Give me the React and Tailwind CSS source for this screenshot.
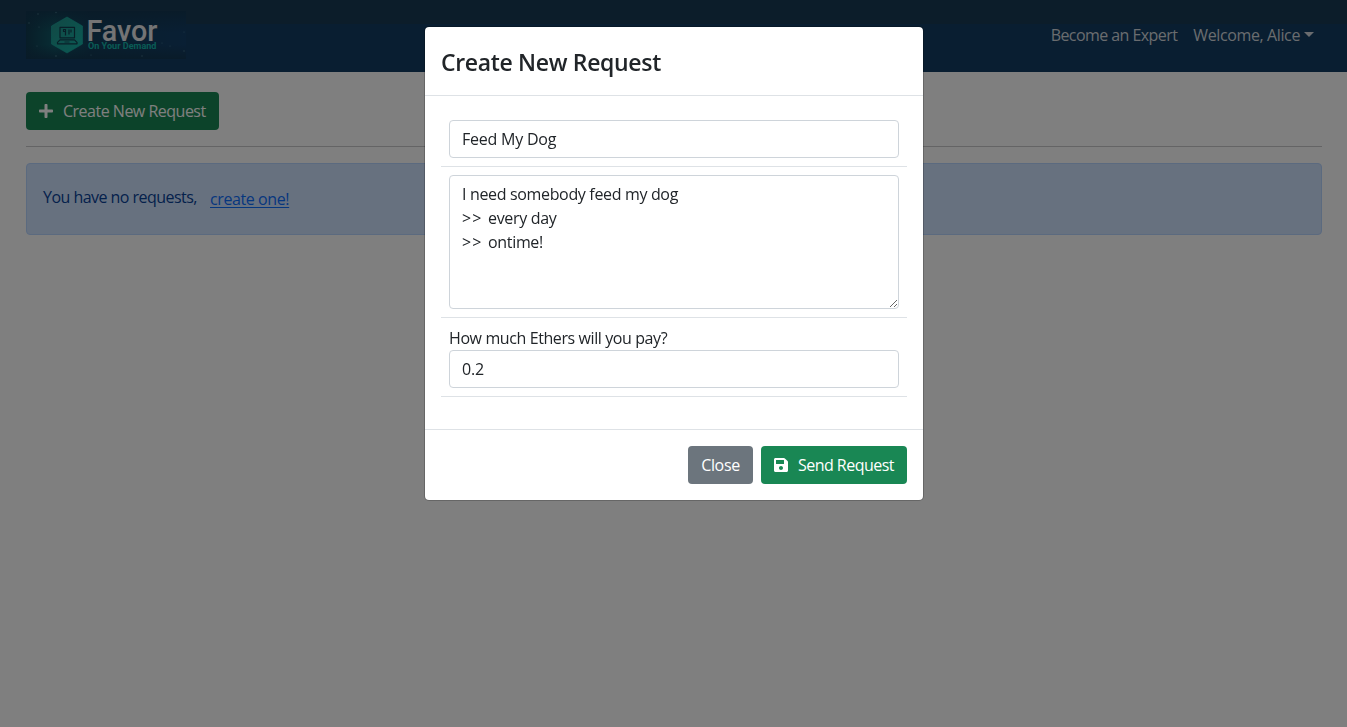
import { FaPlus, FaSave } from "react-icons/fa";

function Logo() {
  return (
    <svg width="160" height="48" viewBox="26 11 160 48" className="block" role="img" aria-label="Favor">
      <defs>
        <linearGradient id="logoBg" x1="0" x2="1" y1="0" y2="0">
          <stop offset="0" stopColor="#113a50" />
          <stop offset="0.18" stopColor="#115a68" />
          <stop offset="0.4" stopColor="#123f5c" />
          <stop offset="1" stopColor="#123e68" />
        </linearGradient>
        <linearGradient id="logoShade" x1="0" x2="0" y1="0" y2="1">
          <stop offset="0" stopColor="#123650" stopOpacity="0.9" />
          <stop offset="0.45" stopColor="#123650" stopOpacity="0" />
          <stop offset="0.7" stopColor="#123650" stopOpacity="0" />
          <stop offset="1" stopColor="#123650" stopOpacity="0.9" />
        </linearGradient>
        <linearGradient id="hex" x1="0" x2="1" y1="0" y2="1">
          <stop offset="0" stopColor="#249089" />
          <stop offset="1" stopColor="#14b4a8" />
        </linearGradient>
      </defs>
      <rect x="26" y="11" width="160" height="48" fill="url(#logoBg)" />
      <rect x="26" y="11" width="160" height="48" fill="url(#logoShade)" />
      <g fill="#5c8ea0" fillOpacity=".7">
        <circle cx="29" cy="23" r=".7" />
        <circle cx="38" cy="14" r=".7" />
        <circle cx="39" cy="27" r=".6" />
        <circle cx="56" cy="12.500" r=".7" />
        <circle cx="37" cy="46" r=".6" />
        <circle cx="56" cy="56" r=".8" />
        <circle cx="91" cy="55" r=".6" />
        <circle cx="142" cy="56" r=".7" />
        <circle cx="162" cy="43" r=".6" />
        <circle cx="170" cy="46" r=".6" />
        <circle cx="184" cy="32" r=".6" />
        <circle cx="184" cy="51" r=".7" />
      </g>
      <path d="M67 17 82.500 26V44L67 53 51.500 44V26Z" fill="url(#hex)" stroke="#18b0a4" strokeWidth=".6" strokeLinejoin="round" />
      <g fill="none" stroke="#123e50" strokeWidth="1.200" strokeLinejoin="round">
        <path d="M60 27.300h14.500v10.500H60z" />
        <path d="M60 39.800h14.500l2.500 2.500v1.500H57.500v-1.500z" />
        <path d="M63.500 29.500h2v2h-2zM65.500 31.500v4M69 29.500v5M71 29.500v3" />
        <path d="M64.500 42h5" strokeWidth=".8" />
      </g>
      <text x="86.500" y="41" textLength="71" lengthAdjust="spacingAndGlyphs" fill="#e8e8ea" fontSize="29" fontWeight="500" fontFamily="Roboto, sans-serif">Favor</text>
      <text x="88" y="48.500" textLength="68.500" lengthAdjust="spacingAndGlyphs" fill="#12b8ac" fontSize="9" fontWeight="700" fontFamily="Roboto, sans-serif">On Your Demand</text>
    </svg>
  );
}

function Navbar() {
  return (
    <nav className="flex h-[72px] items-center justify-between bg-linear-to-b from-[#183a54] from-33% to-[#123c62] to-34% pr-[33px] pl-[26px] text-[#d4d9df]">
      <div className="-mt-0.5"><Logo /></div>
      <div className="-mt-0.5 flex items-center gap-4">
        <a className="tracking-[-0.57px]">Become an Expert</a>
        <a className="flex items-center gap-1 tracking-[-0.38px]">
          Welcome, Alice
          <svg width="10" height="5" viewBox="0 0 10 5" className="-mt-0.5"><path d="M0 0h10L5 5z" fill="currentColor" /></svg>
        </a>
      </div>
    </nav>
  );
}

function Modal() {
  const field = "block w-full rounded border border-[#ced4da] bg-white px-3 py-1.5 text-[#212529] leading-6 tracking-[-0.22px] outline-none";
  return (
    <div className="fixed inset-0 flex items-start justify-center bg-black/50">
      <div className="mt-[26px] ml-px w-[500px] rounded-[5px] border border-black/20 bg-white bg-clip-padding">
        <header className="border-b border-[#dee2e6] px-4 pt-[17px] pb-[15px]">
          <h5 className="text-[23px] leading-9 font-semibold tracking-[-0.33px]">Create New Request</h5>
        </header>
        <div className="p-4">
          <div className="mb-4">
            <div className="border-b border-[#dee2e6] p-2">
              <input className={field} defaultValue="Feed My Dog" />
            </div>
            <div className="border-b border-[#dee2e6] p-2">
              <div
                role="textbox"
                aria-multiline="true"
                contentEditable
                suppressContentEditableWarning
                className="h-[134px] w-full resize-y overflow-hidden rounded border border-[#ced4da] bg-white px-3 py-1.5 tracking-[-0.34px] outline-none"
              >
                <div>I need somebody feed my dog</div>
                <div><span className="tracking-[1.2px]">&gt;&gt; </span>every day</div>
                <div><span className="tracking-[1.2px]">&gt;&gt; </span>ontime!</div>
              </div>
            </div>
            <div className="border-b border-[#dee2e6] p-2">
              <label className="block tracking-[-0.4px]">How much Ethers will you pay?</label>
              <input className={field} defaultValue="0.2" />
            </div>
          </div>
        </div>
        <footer className="flex justify-end gap-2 border-t border-[#dee2e6] p-4 text-white">
          <button className="flex h-[38px] w-[65px] items-center justify-center rounded bg-[#6c757d] tracking-[-0.35px]">Close</button>
          <button className="flex h-[38px] w-[146px] items-center rounded bg-[#198754] pl-[13px] tracking-[-0.53px]">
            <FaSave size={16} className="mr-[9px] -ml-px" />
            Send Request
          </button>
        </footer>
      </div>
    </div>
  );
}

export default function App() {
  return (
    <div className="min-h-screen bg-white font-['Open_Sans','Noto_Sans',sans-serif] text-[16px] leading-6 text-[#212529]">
      <Navbar />
      <main className="pt-5 pr-[25px] pl-[26px]">
        <button className="flex h-[38px] w-[193px] items-center rounded bg-[#198754] pl-3 tracking-[-0.5px] text-white">
          <FaPlus size={16} className="mr-[9px]" />
          Create New Request
        </button>
        <hr className="mt-4 mb-4 border-t border-[#c8c9ca]" />
        <div className="flex h-[72px] items-center rounded border border-[#b6d4fe] bg-[#cfe2ff] px-4 text-[#084298]">
          <span className="-mt-1 w-[167px] tracking-[-0.54px]">You have no requests,</span>
          <a className="tracking-[-0.4px] text-[#0d6efd] underline underline-offset-2">create one!</a>
        </div>
      </main>
      <Modal />
    </div>
  );
}
